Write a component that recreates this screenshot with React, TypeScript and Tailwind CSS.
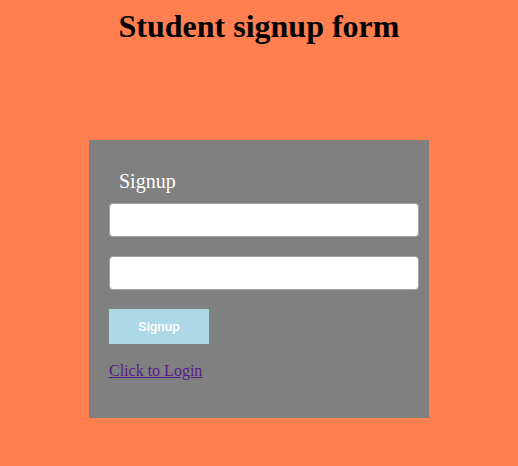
export default function App() {
  return (
    <div className="min-h-[466px] bg-[#ff7f50] font-['Liberation_Serif',serif] pt-[9px]">
      <h1 className="text-center text-[32px] font-bold leading-[35px] text-black">
        Student signup form
      </h1>
      <div className="mx-auto mt-[96px] flex h-[278px] w-[340px] flex-col bg-[#808080] px-5 pt-[30px]">
        <label className="pl-[10px] text-[20px] leading-[22px] text-white">Signup</label>
        <input
          type="text"
          className="mt-[11px] h-[34px] w-[310px] rounded-[4px] border border-[#a3a3a3] bg-white"
        />
        <input
          type="password"
          className="mt-[19px] h-[34px] w-[310px] rounded-[4px] border border-[#a3a3a3] bg-white"
        />
        <button className="mt-[19px] h-[35px] w-[100px] bg-[#add8e6] font-['Roboto',sans-serif] text-[13.33px] font-medium text-white">
          Signup
        </button>
        <a href="#" className="mt-[18px] w-fit text-[16px] leading-[18px] text-[#551a8b] underline">
          Click to Login
        </a>
      </div>
    </div>
  );
}
